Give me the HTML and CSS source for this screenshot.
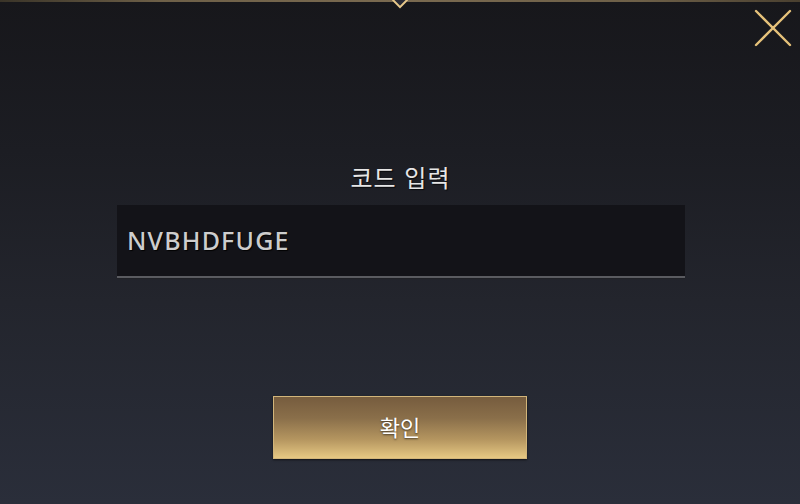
FILE: index.html
```html
<!DOCTYPE html>
<html lang="ko">
<head>
<meta charset="utf-8">
<link rel="stylesheet" href="styles.css">
</head>
<body>
<div class="panel">
  <div class="topline"></div>
  <div class="diamond"></div>
  <button class="close" aria-label="닫기">
    <svg width="38" height="38" viewBox="0 0 38 38"><path d="M2 2L36 36M36 2L2 36" stroke="#e6c27a" stroke-width="2.4" stroke-linecap="round"/></svg>
  </button>
  <div class="content">
    <h1 class="title">코드 입력</h1>
    <div class="field"><span class="code">NVBHDFUGE</span></div>
    <button class="confirm">확인</button>
  </div>
</div>
</body>
</html>
```
FILE: styles.css
```css
* { box-sizing: border-box; }
html, body { margin: 0; padding: 0; }
body {
  width: 800px; height: 504px; overflow: hidden;
  font-family: "Noto Sans CJK KR", "Noto Sans", sans-serif;
}
.panel {
  position: relative;
  width: 800px; height: 504px;
  background: linear-gradient(180deg, #17171b 0%, #1c1d23 30%, #23252d 60%, #2a2e3a 100%);
}
.topline {
  height: 2px;
  background: linear-gradient(90deg, #3a3428 0%, #6e6048 20%, #7a6a50 50%, #6e6048 80%, #4a4030 100%);
}
.diamond {
  position: absolute; left: 394px; top: -6px;
  width: 12px; height: 12px;
  transform: rotate(45deg);
  background: #2a2b36;
  border: 2px solid #e8c88a;
}
.close {
  position: absolute; right: 8px; top: 9px;
  width: 38px; height: 38px; padding: 0;
  border: 0; background: none;
}
.close svg { display: block; }
.content {
  display: flex; flex-direction: column; align-items: center;
  padding-top: 157px;
}
.title {
  margin: 0; height: 36px;
  font-size: 24px; font-weight: 400; line-height: 36px;
  color: #e6e6e6;
  letter-spacing: 1px;
  padding-left: 1px;
  text-shadow: 1px 1px 1px rgba(0,0,0,0.7);
}
.field {
  margin-top: 10px;
  margin-left: 2px;
  width: 568px; height: 73px;
  background: #131318;
  border-bottom: 2px solid #5a5b60;
  box-shadow: 0 1px 0 #202126;
  display: flex; align-items: center;
  padding: 0 10px;
}
.code {
  font-family: "Noto Sans", sans-serif;
  font-size: 25px; font-weight: 500; color: #cdcdcd;
  letter-spacing: 1.2px;
  margin-top: -2px;
  text-shadow: 1px 1px 1px rgba(0,0,0,0.9);
}
.confirm {
  margin-top: 118px;
  width: 254px; height: 63px;
  border: 1px solid #d2b57a;
  background: linear-gradient(180deg, #765c3e 0%, #8a6f4a 35%, #b59660 70%, #e6c883 100%);
  box-shadow: 0 1px 2px rgba(0,0,0,0.6);
  font-family: "Noto Sans CJK KR", sans-serif;
  font-size: 22px; color: #ffffff;
  text-shadow: 0 1px 2px rgba(0,0,0,0.6);
  padding: 0 0 4px;
}
```
